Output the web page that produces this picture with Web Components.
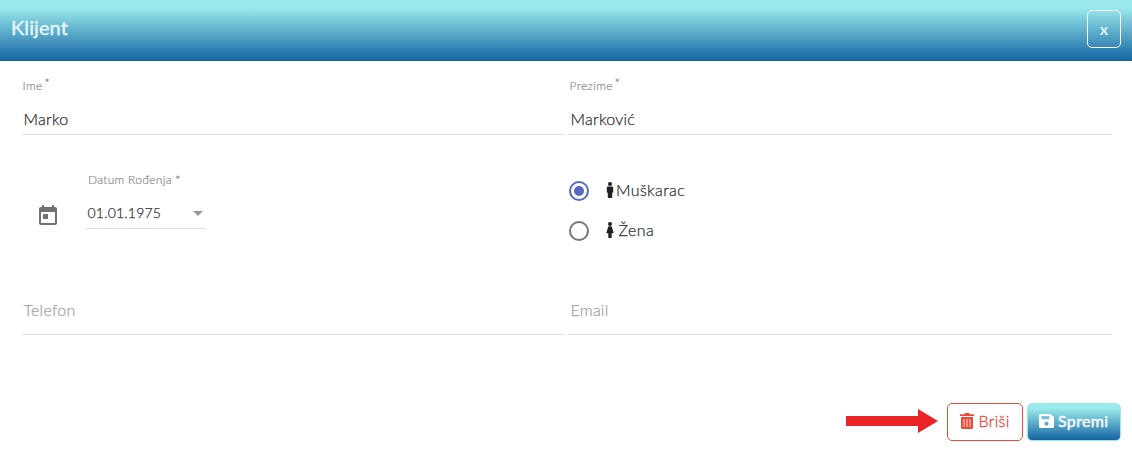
<!DOCTYPE html>
<html lang="hr">
<head>
<meta charset="utf-8">
<title>Klijent</title>
<style>
html,body{margin:0;background:#fff;overflow:hidden}
body{font-family:Lato,"Open Sans",sans-serif;color:#212121;font-size:16px}
</style>
</head>
<body>
<client-dialog></client-dialog>
<script>
const define=(name,html,init)=>customElements.define(name,class extends HTMLElement{
  constructor(){super();this.attachShadow({mode:'open'}).innerHTML=html;}
  connectedCallback(){if(init)init(this,this.shadowRoot);}
});

define('dialog-header',`<style>
:host{display:flex;box-sizing:border-box;height:61px;padding:10px 11px 0 11px;justify-content:space-between;align-items:flex-start;background:linear-gradient(#9aeaec 0%,#9aeaec 12%,#1464a4 100%)}
h1{margin:4px 0 0;font-size:20px;line-height:26px;font-weight:400;letter-spacing:.08px;color:#e8f7fb;-webkit-text-stroke:.35px #e8f7fb}
button{box-sizing:border-box;width:34px;height:38px;padding:0;border:1px solid #fff;border-radius:5px;background:none;color:#e3f1f6;font:700 16px/34px Lato,sans-serif}
</style><h1><slot></slot></h1><button>x</button>`);

define('text-field',`<style>
:host{display:flex;flex-direction:column;box-sizing:border-box;height:60px;border-bottom:1px solid #dedede}
label{display:block;font-size:12px;line-height:16px;height:16px;color:#8c8c8c;font-weight:300;-webkit-text-stroke:.2px #8c8c8c;letter-spacing:.35px;margin-top:3px;padding-left:.5px;white-space:nowrap}
sup{font-size:12px;line-height:0;vertical-align:3px;margin-left:2px}
.v{font-size:16px;line-height:24px;margin-top:13px;padding-left:1.5px;font-weight:300;-webkit-text-stroke:.25px currentColor;letter-spacing:.25px;color:#303030}
:host([empty]) .v{margin-top:23px;color:#a2a2a2}
</style><label><span></span><sup>*</sup></label><div class="v"><slot></slot></div>`,(h,r)=>{r.querySelector('span').textContent=h.getAttribute('label')||'';if(h.hasAttribute('empty'))r.querySelector('label').remove();});

define('date-field',`<style>
:host{display:flex;padding-left:14px;height:58px}
svg{display:block}
.cal{margin:32px 26px 0 0;flex:none}
.box{width:120px;height:57px}
label{display:block;font-size:12px;line-height:16px;color:#8c8c8c;font-weight:300;-webkit-text-stroke:.2px #8c8c8c;letter-spacing:.3px;padding-left:2px;white-space:nowrap}
.v{display:flex;box-sizing:border-box;justify-content:space-between;align-items:center;height:41px;padding:9px 3px 0 1.5px;border-bottom:1px solid #dedede;font-size:14px;font-weight:300;-webkit-text-stroke:.25px #303030;letter-spacing:.22px;color:#303030}
.v svg{margin-top:1px}
</style>
<svg class="cal" width="24" height="24" viewBox="0 0 24 24" fill="#717171"><path d="M19 3h-1V1h-2v2H8V1H6v2H5c-1.11 0-1.99.9-1.99 2L3 19c0 1.1.89 2 2 2h14c1.1 0 2-.9 2-2V5c0-1.1-.9-2-2-2zm0 16H5V8h14v11zM7 10h5v5H7z"/></svg>
<div class="box"><label>Datum Rođenja *</label><div class="v"><span><slot></slot></span><svg width="10" height="5" viewBox="0 0 10 5"><path d="M0 0h10L5 5z" fill="#979797"/></svg></div></div>`);

define('gender-option',`<style>
:host{display:flex;height:40px;align-items:center}
i{box-sizing:border-box;width:20px;height:20px;border:2px solid #757575;border-radius:50%;margin-right:16.5px;display:grid;place-items:center}
:host([checked]) i{border-color:#5868c0}
:host([checked]) i::after{content:"";width:10px;height:10px;border-radius:50%;background:#5868c0}
svg{display:block;margin-right:2.5px;margin-top:-2px}
:host([kind=female]) i{margin-right:17px}
:host([kind=female]) svg{margin-right:4.5px}
span{font-size:16px;line-height:20px;margin-top:-2px;font-weight:300;-webkit-text-stroke:.25px #303030;letter-spacing:.38px;color:#303030}
</style><i></i><svg width="8" height="16" viewBox="0 0 8 16" fill="#212121"><circle cx="4" cy="2" r="2"/><path/></svg><span><slot></slot></span>`,(h,r)=>r.querySelector('path').setAttribute('d',h.getAttribute('kind')==='female'?
'M3 4.300h2c.5 0 .8.3.9.7L7.700 11.200H5.700V15.300c0 .4-.3.700-.7.700H3c-.4 0-.7-.3-.7-.7V11.200H.3L2.100 5c.1-.4.4-.7.9-.7z':
'M2.100 4.500h3.800C6.700 4.500 7.200 5 7.200 5.800v4.200c0 .5-.3.800-.8.800H6.200v4.400c0 .5-.3.800-.8.800H2.600c-.5 0-.8-.3-.8-.8v-4.400h-.2c-.5 0-.8-.3-.8-.8V5.800C.8 5 1.300 4.500 2.100 4.500z'));

define('action-button',`<style>
:host{display:flex;box-sizing:border-box;height:38px;align-items:center;border:1px solid #e74c3c;border-radius:5px;color:#e74c3c;font-size:16px;line-height:24px;font-weight:300;-webkit-text-stroke:.35px currentColor;letter-spacing:.3px;width:76px;padding:0 0 2px 12px;white-space:nowrap}
:host([primary]){width:94px;padding-left:11px;color:#fff;border-color:#9aeaec;background:linear-gradient(#9aeaec 0%,#9aeaec 12%,#1464a4 100%);font-weight:400;letter-spacing:.35px;-webkit-text-stroke:.35px #fff}
</style><slot name="icon"></slot><slot></slot>`);

define('pointer-arrow',`<style>:host,svg{display:block}</style><svg width="92" height="24" viewBox="0 0 92 24" fill="#ea2427"><path d="M0 7h72V0l20 12-20 12v-7H0z"/></svg>`);

define('client-dialog',`<style>
:host{display:block;height:458px;background:#fff}
main{display:grid;grid-template-columns:543px 542px;column-gap:4px;grid-template-rows:60px 37px 80px 23px 60px;padding:14px 21px 0 22px}
.date{grid-row:3;grid-column:1}
.gender{grid-row:3;grid-column:2;margin-top:-1px}
.bottom{grid-row:5}
footer{display:flex;justify-content:flex-end;align-items:center;padding:68px 11px 0 0}
pointer-arrow{margin:-2px 9px 0 0}
action-button+action-button{margin-left:4px}
footer action-button svg{display:block;flex:none}
</style>
<dialog-header>Klijent</dialog-header>
<main>
<text-field label="Ime">Marko</text-field>
<text-field label="Prezime">Marković</text-field>
<date-field class="date">01.01.1975</date-field>
<div class="gender"><gender-option kind="male" checked>Muškarac</gender-option><gender-option kind="female">Žena</gender-option></div>
<text-field class="bottom" empty>Telefon</text-field>
<text-field class="bottom" empty>Email</text-field>
</main>
<footer>
<pointer-arrow></pointer-arrow>
<action-button><svg slot="icon" width="14" height="16" viewBox="0 0 14 16" style="margin:0 4.500px 0 0"><path d="M0 1.200h4.200L5 0h4l.8 1.200H14V3H0z" fill="#e74c3c"/><path d="M1 4h12v10.500c0 .9-.6 1.500-1.500 1.500h-9C1.600 16 1 15.400 1 14.500z" fill="#e74c3c"/><path d="M4 6v8M7 6v8M10 6v8" stroke="#f5aaa2" stroke-width="1.500"/></svg>Briši</action-button>
<action-button primary><svg slot="icon" width="15" height="14" viewBox="0 0 15 14" style="margin:0 4px 0 0"><path fill-rule="evenodd" fill="#fff" d="M1.500 0h9.800l3.700 3v9.500c0 .9-.6 1.500-1.500 1.500h-12C.6 14 0 13.400 0 12.500v-11C0 .6.6 0 1.500 0zM2.500 2v3.200h7.800V2zM7.500 7.500a2.100 2.100 0 1 0 0 4.200 2.100 2.100 0 0 0 0-4.200z"/></svg>Spremi</action-button>
</footer>`);
</script>
</body>
</html>
